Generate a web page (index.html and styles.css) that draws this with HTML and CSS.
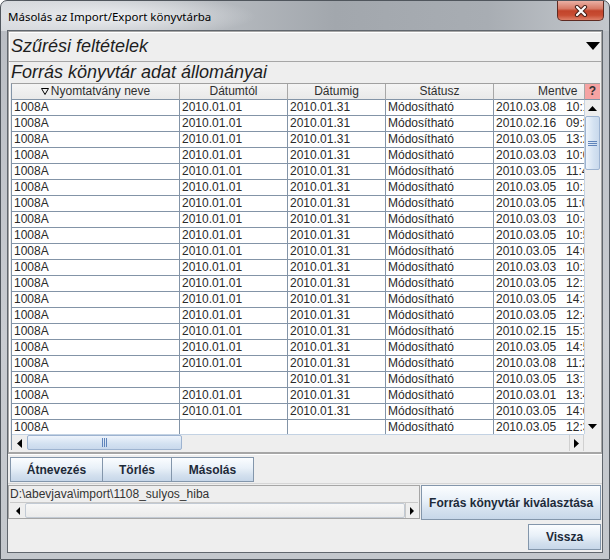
FILE: index.html
```html
<!DOCTYPE html>
<html lang="hu">
<head>
<meta charset="utf-8">
<title>Másolás az Import/Export könyvtárba</title>
<link rel="stylesheet" href="styles.css">
</head>
<body>
<div class="window">
  <div class="titlebar">
    <span class="title">Másolás az Import/Export könyvtárba</span>
    <div class="close">
      <svg width="14" height="12" viewBox="0 0 14 12"><path d="M3 2 L11 10 M11 2 L3 10" stroke="#47211a" stroke-width="4.2" stroke-linecap="round"/><path d="M3 2 L11 10 M11 2 L3 10" stroke="#ffffff" stroke-width="2.2" stroke-linecap="round"/></svg>
    </div>
  </div>
  <div class="client">
    <div class="filter">
      <span class="ptitle">Szűrési feltételek</span>
      <svg class="tri" width="14" height="8" viewBox="0 0 14 8"><polygon points="0,0 14,0 7,8" fill="#000"/></svg>
    </div>
    <div class="source">
      <div class="ptitle label">Forrás könyvtár adat állományai</div>
      <div class="scrollpane">
        <div class="hview">
          <div class="row hrow">
            <div class="hc"><svg class="sort" width="8" height="7" viewBox="0 0 8 7"><polygon points="0.5,0.5 7.5,0.5 4,6.5" fill="none" stroke="#000" stroke-width="1"/></svg>Nyomtatvány neve</div>
            <div class="hc">Dátumtól</div>
            <div class="hc">Dátumig</div>
            <div class="hc">Státusz</div>
            <div class="hc hm">Mentve</div>
          </div>
        </div>
        <div class="qcorner">?</div>
        <div class="viewport">
          <div class="row"><div class="c">1008A</div><div class="c">2010.01.01</div><div class="c">2010.01.31</div><div class="c">Módosítható</div><div class="c">2010.03.08   10:12:44</div></div>
          <div class="row"><div class="c">1008A</div><div class="c">2010.01.01</div><div class="c">2010.01.31</div><div class="c">Módosítható</div><div class="c">2010.02.16   09:31:05</div></div>
          <div class="row"><div class="c">1008A</div><div class="c">2010.01.01</div><div class="c">2010.01.31</div><div class="c">Módosítható</div><div class="c">2010.03.05   13:22:10</div></div>
          <div class="row"><div class="c">1008A</div><div class="c">2010.01.01</div><div class="c">2010.01.31</div><div class="c">Módosítható</div><div class="c">2010.03.03   10:05:51</div></div>
          <div class="row"><div class="c">1008A</div><div class="c">2010.01.01</div><div class="c">2010.01.31</div><div class="c">Módosítható</div><div class="c">2010.03.05   11:40:02</div></div>
          <div class="row"><div class="c">1008A</div><div class="c">2010.01.01</div><div class="c">2010.01.31</div><div class="c">Módosítható</div><div class="c">2010.03.05   10:18:37</div></div>
          <div class="row"><div class="c">1008A</div><div class="c">2010.01.01</div><div class="c">2010.01.31</div><div class="c">Módosítható</div><div class="c">2010.03.05   11:03:29</div></div>
          <div class="row"><div class="c">1008A</div><div class="c">2010.01.01</div><div class="c">2010.01.31</div><div class="c">Módosítható</div><div class="c">2010.03.03   10:44:16</div></div>
          <div class="row"><div class="c">1008A</div><div class="c">2010.01.01</div><div class="c">2010.01.31</div><div class="c">Módosítható</div><div class="c">2010.03.05   10:57:08</div></div>
          <div class="row"><div class="c">1008A</div><div class="c">2010.01.01</div><div class="c">2010.01.31</div><div class="c">Módosítható</div><div class="c">2010.03.05   14:09:33</div></div>
          <div class="row"><div class="c">1008A</div><div class="c">2010.01.01</div><div class="c">2010.01.31</div><div class="c">Módosítható</div><div class="c">2010.03.03   10:26:41</div></div>
          <div class="row"><div class="c">1008A</div><div class="c">2010.01.01</div><div class="c">2010.01.31</div><div class="c">Módosítható</div><div class="c">2010.03.05   12:15:20</div></div>
          <div class="row"><div class="c">1008A</div><div class="c">2010.01.01</div><div class="c">2010.01.31</div><div class="c">Módosítható</div><div class="c">2010.03.05   14:38:12</div></div>
          <div class="row"><div class="c">1008A</div><div class="c">2010.01.01</div><div class="c">2010.01.31</div><div class="c">Módosítható</div><div class="c">2010.03.05   12:49:55</div></div>
          <div class="row"><div class="c">1008A</div><div class="c">2010.01.01</div><div class="c">2010.01.31</div><div class="c">Módosítható</div><div class="c">2010.02.15   15:30:04</div></div>
          <div class="row"><div class="c">1008A</div><div class="c">2010.01.01</div><div class="c">2010.01.31</div><div class="c">Módosítható</div><div class="c">2010.03.05   14:51:47</div></div>
          <div class="row"><div class="c">1008A</div><div class="c">2010.01.01</div><div class="c">2010.01.31</div><div class="c">Módosítható</div><div class="c">2010.03.08   11:20:36</div></div>
          <div class="row"><div class="c">1008A</div><div class="c"></div><div class="c">2010.01.31</div><div class="c">Módosítható</div><div class="c">2010.03.05   13:12:09</div></div>
          <div class="row"><div class="c">1008A</div><div class="c">2010.01.01</div><div class="c">2010.01.31</div><div class="c">Módosítható</div><div class="c">2010.03.01   13:45:18</div></div>
          <div class="row"><div class="c">1008A</div><div class="c">2010.01.01</div><div class="c">2010.01.31</div><div class="c">Módosítható</div><div class="c">2010.03.05   14:02:27</div></div>
          <div class="row"><div class="c">1008A</div><div class="c"></div><div class="c"></div><div class="c">Módosítható</div><div class="c">2010.03.05   12:33:50</div></div>
        </div>
        <div class="vsb">
          <div class="arrow"><svg width="9" height="5" viewBox="0 0 9 5"><polygon points="0,5 9,5 4.5,0" fill="#000"/></svg></div>
          <div class="vthumb"><svg width="9" height="7" viewBox="0 0 9 7"><path d="M0 1.5H9M0 3.5H9M0 5.5H9" stroke="#5f84bb" stroke-width="1"/></svg></div>
          <div class="track"></div>
          <div class="arrow"><svg width="9" height="5" viewBox="0 0 9 5"><polygon points="0,0 9,0 4.5,5" fill="#000"/></svg></div>
        </div>
        <div class="hsb">
          <div class="arrow"><svg width="5" height="9" viewBox="0 0 5 9"><polygon points="5,0 5,9 0,4.5" fill="#000"/></svg></div>
          <div class="hthumb"><svg width="7" height="9" viewBox="0 0 7 9"><path d="M1.5 0V9M3.5 0V9M5.5 0V9" stroke="#5f84bb" stroke-width="1"/></svg></div>
          <div class="track"></div>
          <div class="arrow rbox"><svg width="5" height="9" viewBox="0 0 5 9"><polygon points="0,0 0,9 5,4.5" fill="#000"/></svg></div>
        </div>
        <div class="corner"></div>
      </div>
    </div>
    <div class="actions">
      <button class="btn b1">Átnevezés</button><button class="btn b2">Törlés</button><button class="btn b3">Másolás</button>
    </div>
    <div class="pathrow">
      <div class="pathfield">
        <div class="pathtext">D:\abevjava\import\1108_sulyos_hiba</div>
        <div class="psb">
          <div class="parrow"><svg width="4" height="8" viewBox="0 0 4 8"><polygon points="4,0 4,8 0,4" fill="#000"/></svg></div>
          <div class="pthumb"></div>
          <div class="parrow pr"><svg width="4" height="8" viewBox="0 0 4 8"><polygon points="0,0 0,8 4,4" fill="#000"/></svg></div>
        </div>
      </div>
      <button class="btn choose">Forrás könyvtár kiválasztása</button>
    </div>
    <div class="backrow">
      <button class="btn back">Vissza</button>
    </div>
  </div>
</div>
</body>
</html>
```
FILE: styles.css
```css
* { box-sizing: border-box; }

html, body {
  margin: 0;
  padding: 0;
}

body {
  width: 610px;
  height: 560px;
  overflow: hidden;
  background: #ffffff;
  font-family: "Liberation Sans", Arial, sans-serif;
}

.window {
  width: 610px;
  height: 560px;
  border: 1px solid #50565d;
  border-radius: 7px 7px 0 0;
  padding: 0 6px 6px 6px;
  display: flex;
  flex-direction: column;
  background:
    radial-gradient(ellipse 150px 22px at 105px 15px, rgba(238,240,243,0.95), rgba(238,240,243,0) 100%),
    linear-gradient(to right, #d6d9dd 0%, #bcc0c5 30%, #a2a7ad 55%, #a8adb3 80%, #c3c7cc 100%) top left / 100% 30px no-repeat,
    linear-gradient(#b9bdc3, #c9ccd1 60%, #c3c7cc);
}

.titlebar {
  height: 29px;
  display: flex;
  justify-content: space-between;
  align-items: flex-start;
}

.title {
  font-family: "Noto Sans", "Open Sans", sans-serif;
  font-size: 11.5px;
  line-height: 16px;
  color: #000;
  padding: 8px 0 0 1px;
}

.close {
  width: 47px;
  height: 20px;
  margin-right: -1px;
  border: 1px solid #5e2a21;
  border-top: none;
  border-radius: 0 0 5px 5px;
  background: linear-gradient(#eab0a4 0%, #d77a66 40%, #c2442b 52%, #c84d33 75%, #de8069 100%);
  display: flex;
  align-items: center;
  justify-content: center;
}

.client {
  flex: 1;
  border: 1px solid #60666d;
  background: #eeeeee;
  display: flex;
  flex-direction: column;
}

.ptitle {
  font-style: italic;
  font-size: 18px;
  color: #1e1e1e;
}

.filter {
  height: 31px;
  border: 1px solid #a6a6a6;
  box-shadow: inset 1px 1px 0 #ffffff;
  display: flex;
  align-items: center;
  justify-content: space-between;
  padding: 0 1px 0 2px;
}

.tri { margin-top: -2px; }

.source {
  height: 391px;
  border: 1px solid #a6a6a6;
  border-top: none;
  box-shadow: inset 1px 0 0 #ffffff;
  display: flex;
  flex-direction: column;
  padding: 0 1px 0 1px;
}

.label {
  height: 21px;
  line-height: 21px;
  padding-left: 1px;
}

.scrollpane {
  display: grid;
  grid-template-columns: 1fr 16px;
  grid-template-rows: 16px 334px 16px;
  border-left: 1px solid #8394a7;
  border-top: 1px solid #a0a0a0;
  margin-left: 1px;
}

.hview, .viewport {
  overflow: hidden;
  min-width: 0;
}

.row {
  display: grid;
  grid-template-columns: 168px 108px 98px 108px 128px;
  width: 610px;
  height: 16px;
}

.c {
  border-right: 1px solid #8394a7;
  border-bottom: 1px solid #8394a7;
  background: #ffffff;
  font-size: 12px;
  line-height: 15px;
  color: #2a2a2a;
  padding-left: 2px;
  white-space: pre;
  overflow: hidden;
}

.hc {
  border-right: 1px solid #a7a7a7;
  border-bottom: 1px solid #8394a7;
  background: linear-gradient(#f4f4f4, #e9e9e9);
  font-size: 12px;
  line-height: 15px;
  color: #2f2f2f;
  text-align: center;
  white-space: nowrap;
  overflow: hidden;
  display: flex;
  align-items: center;
  justify-content: center;
  gap: 2px;
}

.hm {
  justify-content: flex-start;
  padding-left: 44px;
}

.sort { flex: none; }

.qcorner {
  background: #f5a3a3;
  border-left: 1px solid #a7a7a7;
  border-bottom: 1px solid #8394a7;
  font-size: 12px;
  font-weight: bold;
  line-height: 15px;
  text-align: center;
  color: #333;
}

.vsb {
  display: flex;
  flex-direction: column;
  background: #eeeeee;
  border-left: 1px solid #c3d2e3;
}

.arrow {
  flex: none;
  width: 15px;
  height: 16px;
  display: flex;
  align-items: center;
  justify-content: center;
}

.vsb .arrow { width: auto; }

.vthumb {
  flex: none;
  height: 54px;
  border: 1px solid #9db3d0;
  border-radius: 2px;
  background: linear-gradient(to right, #eef4fb, #d3e1f1 60%, #c9d9ec);
  display: flex;
  align-items: center;
  justify-content: center;
}

.track { flex: 1; }

.hsb {
  display: flex;
  background: #eeeeee;
  border-top: 1px solid #c3d2e3;
}

.hthumb {
  flex: none;
  width: 155px;
  border: 1px solid #9db3d0;
  border-radius: 2px;
  background: linear-gradient(#eef4fb, #d3e1f1 60%, #c9d9ec);
  display: flex;
  align-items: center;
  justify-content: center;
}

.rbox {
  border-left: 1px solid #d0d0d0;
  border-right: 1px solid #d0d0d0;
}

.corner {
  background: #eeeeee;
}

.actions {
  height: 31px;
  border-top: 1px solid #a6a6a6;
  box-shadow: inset 0 1px 0 #ffffff;
  border-bottom: 1px solid #d6d6d6;
  padding: 3px 0 0 2px;
  display: flex;
  align-items: flex-start;
}

.btn {
  font-family: "Liberation Sans", Arial, sans-serif;
  font-weight: bold;
  font-size: 12px;
  color: #1d2a39;
  border: 1px solid #8396ab;
  background: linear-gradient(#fbfdff 0%, #e8f0f8 45%, #d3e0ee 75%, #c7d7e9 100%);
  padding: 0;
  margin: 0;
  cursor: default;
}

.b1 { width: 93px; height: 25px; }
.b2 { width: 70px; height: 25px; margin-left: -1px; }
.b3 { width: 83px; height: 25px; margin-left: -1px; }

.pathrow {
  display: flex;
  gap: 1px;
  padding: 1px 1px 0 0;
  height: 36px;
}

.pathfield {
  width: 413px;
  height: 34px;
  border: 1px solid #a6a6a6;
  background: #eeeeee;
  display: flex;
  flex-direction: column;
}

.pathtext {
  font-size: 12px;
  line-height: 16px;
  color: #333;
  padding-left: 1px;
  white-space: pre;
}

.psb {
  display: flex;
  height: 16px;
  margin: 0 1px 0 1px;
  border-top: 1px solid #c9c9c9;
}

.parrow {
  width: 15px;
  display: flex;
  align-items: center;
  justify-content: center;
  flex: none;
}

.pr {
  width: 13px;
  border-left: 1px solid #c9c9c9;
}

.pthumb {
  flex: 1;
  border: 1px solid #c2cad4;
  border-radius: 2px;
  background: linear-gradient(#f7f7f7, #ebebeb);
}

.choose {
  width: 180px;
  height: 35px;
}

.backrow {
  flex: 1;
  display: flex;
  justify-content: flex-end;
  align-items: flex-start;
  padding: 4px 1px 0 0;
}

.back {
  width: 73px;
  height: 26px;
}
```
